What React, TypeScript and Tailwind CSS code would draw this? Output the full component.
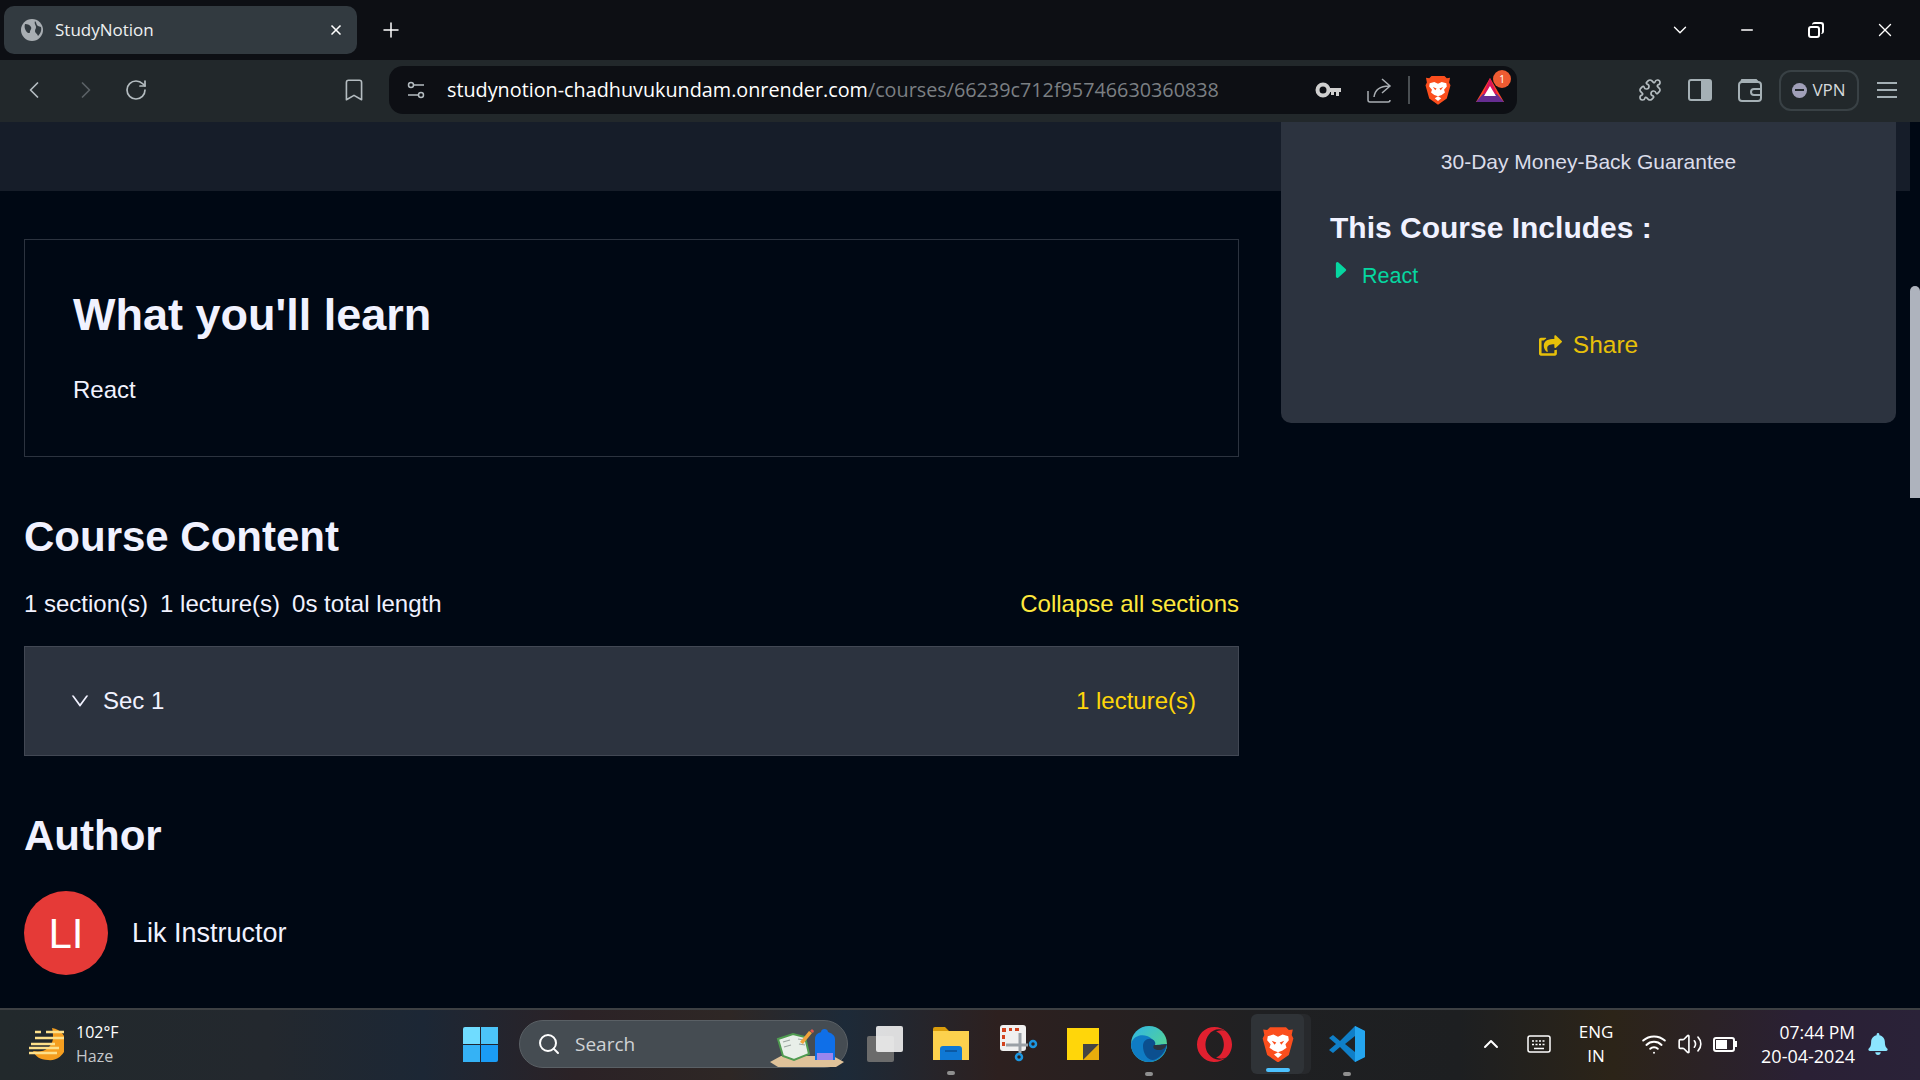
import { Puzzle, RotateCw, Search, ChevronLeft, ChevronRight, ChevronDown, ChevronUp, Plus, X, Minus, Wifi, Volume2, Bookmark } from "lucide-react";
import { FaShareSquare, FaBell } from "react-icons/fa";
import { BsFillCaretRightFill } from "react-icons/bs";
import { AiOutlineDown } from "react-icons/ai";
import { SiOpera } from "react-icons/si";

const BraveIcon = ({ size = 26 }: { size?: number }) => (
    <svg width={size} height={size * 1.14} viewBox="0 0 28 32">
        <path d="M7 1h14l2.500 2.500 3.500-.5-1 5 1.500 3-4 14.500L14 32l-9.500-6.500L.5 11 2 8 1 3l3.500.5z" fill="#fb4e1d" />
        <path d="M5 9l5-1.500 4 2 4-2L23 9l.5 3.500-3 3.500 1 3-3.500 2.500L14 23l-4-1.500L6.500 19l1-3-3-3.500z" fill="#fff" />
        <path d="M10.500 25l3.500-2 3.500 2L14 28z" fill="#fff" />
        <path d="M8.500 13l4 1.500-1.500 2zM19.500 13l-4 1.500 1.500 2z" fill="#fb4e1d" />
    </svg>
);

const BatIcon = () => (
    <svg width="28" height="26" viewBox="0 0 28 26">
        <path d="M14 1L0 25h28z" fill="#ff4724" />
        <path d="M14 1L7 17h14z" fill="#d9145b" />
        <path d="M0 25l7-8h14l7 8z" fill="#662d91" />
        <path d="M14 9l-6 10h12z" fill="#fff" />
    </svg>
);

const WeatherIcon = () => (
    <svg width="36" height="34" viewBox="0 0 36 34">
        <path d="M24 1a16 16 0 0 1-4 32C12 33 7 29 5 24c10 2 18-2 20-12 0-4 0-8-1-11z" fill="#f59e1f" />
        <path d="M3 17h24M1 21h30M1 26h28M7 5h6M18 5h18M7 11h30" stroke="#fde08a" strokeWidth="2.500" />
    </svg>
);

const WindowsLogo = () => (
    <div className="grid grid-cols-2 gap-[1px] w-[35px] h-[35px]">
        <div className="bg-[#6fdcff] rounded-tl-[2px]" />
        <div className="bg-[#4cc4f8]" />
        <div className="bg-[#35b2f5]" />
        <div className="bg-[#1a9cf5] rounded-br-[2px]" />
    </div>
);

const SearchArt = () => (
    <svg width="76" height="42" viewBox="0 0 76 42">
        <path d="M1 36l11-6h52l11 6-8 5H9z" fill="#dfc299" />
        <path d="M9 13l15-5 12 3 4 17-15 6-11-4z" fill="#e8efe9" stroke="#4f9b50" strokeWidth="2" />
        <path d="M14 16l7-2M15 21l7-2M29 13l6 1M30 18l6 1" stroke="#9aa5a0" strokeWidth="1.200" />
        <path d="M31 16l9-11 3 2-9 11z" fill="#f2a33a" />
        <path d="M41 5l2-2 2 2-1 2z" fill="#e2574c" />
        <path d="M46 34V13c0-5 4-6 6-7 0-4 7-4 7 0 3 1 7 3 7 7v21z" fill="#0f6fe8" />
        <path d="M48 27h16v7H48z" fill="#9a86ee" />
    </svg>
);

const TaskViewIcon = () => (
    <div className="relative w-[36px] h-[36px]">
        <div className="absolute left-0 bottom-0 w-[27px] h-[26px] rounded-[2px] bg-[#6b6b6b]" />
        <div className="absolute right-0 top-0 w-[27px] h-[26px] rounded-[2px] bg-[#f1f1f1] opacity-90" />
    </div>
);

const ExplorerIcon = () => (
    <svg width="36" height="34" viewBox="0 0 36 34">
        <path d="M0 2a2 2 0 0 1 2-2h10l4 4h-16z" fill="#d99c0b" />
        <path d="M0 4h36v29H0z" fill="#fcd14d" />
        <path d="M7 22a3 3 0 0 1 3-3h16a3 3 0 0 1 3 3v11H7z" fill="#0f78d4" />
        <path d="M12 24h12" stroke="#0a4f94" strokeWidth="1.500" />
    </svg>
);

const SnipIcon = () => (
    <svg width="38" height="38" viewBox="0 0 38 38">
        <rect x="0" y="0" width="26" height="26" rx="3" fill="#f0f0f0" />
        <path d="M2 3h4v4H2zM9 3h3v3H9zM15 3h4v3h-4zM2 10h3v4H2zM2 17h3v4H2z" fill="#d2421d" />
        <path d="M6 20h22M20 8v20" stroke="#9aa0a6" strokeWidth="3" />
        <circle cx="33" cy="19" r="3" fill="none" stroke="#1c96e0" strokeWidth="2.500" />
        <circle cx="19" cy="32" r="3" fill="none" stroke="#1c96e0" strokeWidth="2.500" />
    </svg>
);

const StickyIcon = () => (
    <svg width="32" height="32" viewBox="0 0 32 32">
        <path d="M0 0h32v16L16 32H0z" fill="#ffd60a" />
        <path d="M16 32V16h16z" fill="#444" />
        <path d="M16 32l16-16v16z" fill="#e8ad0c" />
    </svg>
);

const EdgeIcon = () => (
    <svg width="36" height="36" viewBox="0 0 36 36">
        <defs>
            <linearGradient id="edgeA" x1="0" y1="0" x2="1" y2="1">
                <stop offset="0" stopColor="#2fb5e8" />
                <stop offset="1" stopColor="#5fdc7c" />
            </linearGradient>
        </defs>
        <circle cx="18" cy="18" r="18" fill="url(#edgeA)" />
        <path d="M0 18C2 10 10 8 16 10c5 2 8 5 8 9H36c-1 10-9 17-18 17C8 36 0 28 0 18z" fill="#0f7cc4" />
        <path d="M12 20c0-5 4-8 8-7 4 1 5 4 4 6 4 0 6-1 12-1-2 9-8 15-14 16-6 0-10-7-10-14z" fill="#0b4f8f" />
        <path d="M23 19c-2 3 1 5 5 5s6-2 8-6c-4 1-8 1-13 1z" fill="#2c333f" />
    </svg>
);

const VsCodeIcon = () => (
    <svg width="36" height="36" viewBox="0 0 36 36">
        <path d="M26 0l10 5v26l-10 5L11 21l-7 6-4-3 7-6-7-6 4-3 7 6z" fill="#0f7fc8" />
        <path d="M26 0l10 5v26l-10 5z" fill="#24a5ef" />
        <path d="M26 10v16l-10-8z" fill="#202326" />
    </svg>
);

const Dot = ({ active }: { active?: boolean }) => (
    <div className={active ? "w-[24px] h-[4px] rounded-full bg-[#4cc2ff]" : "w-[8px] h-[4px] rounded-full bg-[#8f8f8f]"} />
);

export default function App() {
    return (
        <div className="w-[1920px] h-[1080px] flex flex-col overflow-hidden bg-[#000814] font-['Liberation_Sans',sans-serif]">
            {/* tab strip */}
            <div className="h-[60px] bg-[#0d0f14] flex items-center pl-[4px] text-white font-['Open_Sans',sans-serif]">
                <div className="w-[353px] h-[48px] rounded-[10px] bg-[#323a40] flex items-center pl-[17px] pr-[13px]">
                    <svg width="22" height="22" viewBox="0 0 22 22">
                        <circle cx="11" cy="11" r="11" fill="#a9aeb3" />
                        <path d="M4 5c3 0 5 1 6 3s-1 3-1 5-3 1-4-1-2-4-1-7zM14 2c2 2 1 4 3 5l3 1c1 4-1 7-3 9-1-3-3-3-3-5s1-2 1-4-2-3-1-6z" fill="#323a40" />
                    </svg>
                    <span className="ml-[12px] text-[17px] text-[#eef0f1]">StudyNotion</span>
                    <X className="ml-auto text-white" size={16} strokeWidth={2.500} />
                </div>
                <Plus className="ml-[22px]" size={24} strokeWidth={1.500} />
                <div className="ml-auto flex items-center">
                    <ChevronDown size={22} strokeWidth={1.500} className="w-[24px] mr-[46px]" />
                    <Minus size={18} strokeWidth={2} className="mr-[52px]" />
                    <div className="relative w-[16px] h-[16px] mr-[50px]">
                        <div className="absolute left-0 bottom-0 w-[12px] h-[12px] rounded-[3px] border-2 border-white" />
                        <div className="absolute right-0 top-0 w-[12px] h-[12px] rounded-[3px] border-t-2 border-r-2 border-white" />
                    </div>
                    <X size={22} strokeWidth={1.500} className="mr-[24px]" />
                </div>
            </div>

            {/* toolbar */}
            <div className="h-[62px] pb-[2px] bg-[#22282b] flex items-center font-['Open_Sans',sans-serif] text-[#b4bcc0]">
                <ChevronLeft className="ml-[20px]" size={28} strokeWidth={1.500} />
                <ChevronRight className="ml-[24px] text-[#5a6165]" size={28} strokeWidth={1.500} />
                <RotateCw className="ml-[24px]" size={24} strokeWidth={1.700} />
                <Bookmark className="ml-[193px]" size={26} strokeWidth={1.500} />
                <div className="ml-[22px] w-[1128px] h-[48px] rounded-[14px] bg-[#0d0f14] flex items-center">
                    <svg className="ml-[17px]" width="20" height="20" viewBox="0 0 20 20" fill="none" stroke="#b4bcc0" strokeWidth="1.500">
                        <circle cx="5" cy="5" r="2.500" />
                        <path d="M8 5h10M2 15h10" />
                        <circle cx="15" cy="15" r="2.500" />
                    </svg>
                    <span className="ml-[21px] text-[19.800px] text-white">studynotion-chadhuvukundam.onrender.com<span className="text-[#7b7f83]">/courses/66239c712f95746630360838</span></span>
                    <div className="ml-auto flex items-center">
                        <svg className="mr-[25px]" width="26" height="16" viewBox="0 0 26 16">
                            <circle cx="8" cy="8" r="5.500" fill="none" stroke="#cfcfcf" strokeWidth="4" />
                            <path d="M13 6h13v4h-2v4h-3v-4h-2v3h-3v-3h-3z" fill="#cfcfcf" />
                        </svg>
                        <svg className="mr-[16px]" width="26" height="26" viewBox="0 0 26 26" fill="none" stroke="#a9aeb3" strokeWidth="1.500">
                            <path d="M2 14v9a2 2 0 0 0 2 2h18a2 2 0 0 0 2-2M8 20c1-7 6-11 15-11M16 2l8 7-8 7" />
                        </svg>
                        <div className="w-[2px] h-[28px] bg-[#4a4f53] mr-[15px]" />
                        <div className="mr-[25px]"><BraveIcon /></div>
                        <div className="relative mr-[13px]">
                            <BatIcon />
                            <div className="absolute -top-[7px] -right-[7px] w-[18px] h-[18px] rounded-full bg-[#ee5b32] text-white text-[10px] flex items-center justify-center">1</div>
                        </div>
                    </div>
                </div>
                <Puzzle className="ml-[121px]" size={24} strokeWidth={1.700} />
                <div className="ml-[26px] w-[24px] h-[22px] rounded-[3px] border-2 border-[#a5b0b5] flex justify-end">
                    <div className="w-[9px] h-full bg-[#a5b0b5]" />
                </div>
                <svg className="ml-[26px]" width="24" height="24" viewBox="0 0 24 24" fill="none" stroke="#a5b0b5" strokeWidth="2">
                    <rect x="1" y="4" width="22" height="19" rx="3" />
                    <path d="M3 4l1-2h14l2 2M23 11h-7a2 2 0 0 0 0 6h7" />
                </svg>
                <div className="ml-[17px] w-[80px] h-[41px] rounded-[12px] border-2 border-[#394145] flex items-center justify-center gap-[5px] text-[#d5d9db] text-[17px]">
                    <div className="w-[15px] h-[15px] rounded-full bg-[#a09fb8] flex items-center justify-center">
                        <div className="w-[9px] h-[2px] bg-[#22282b]" />
                    </div>
                    VPN
                </div>
                <div className="ml-[18px] w-[20px] flex flex-col gap-[5px]">
                    <div className="h-[2px] bg-[#a5b0b5]" />
                    <div className="h-[2px] bg-[#a5b0b5]" />
                    <div className="h-[2px] bg-[#a5b0b5]" />
                </div>
            </div>

            {/* page */}
            <div className="flex-1 flex overflow-hidden">
                <div className="relative flex-1">
                    <div className="h-[69px] bg-[#161d29]" />

                    <div className="ml-[24px] w-[1215px] mt-[48px]">
                        <div className="h-[218px] border border-[#2c333f] pl-[48px] pt-[51px]">
                            <h2 className="text-[45px] leading-[48px] font-bold text-[#f1f2ff]">What you'll learn</h2>
                            <p className="mt-[36px] text-[24px] leading-[30px] text-[#f1f2ff]">React</p>
                        </div>

                        <h2 className="mt-[57px] text-[42px] leading-[46px] font-bold text-[#f1f2ff]">Course Content</h2>
                        <div className="mt-[29px] flex justify-between items-center text-[24px] leading-[30px] text-[#f1f2ff]">
                            <div className="flex gap-[12px]">
                                <span>1 section(s)</span>
                                <span>1 lecture(s)</span>
                                <span>0s total length</span>
                            </div>
                            <span className="text-[#ffe83d]">Collapse all sections</span>
                        </div>

                        <div className="mt-[27px] h-[110px] bg-[#2c333f] border border-[#424854] flex items-center pl-[44px] pr-[42px] text-[24px] text-[#f1f2ff]">
                            <AiOutlineDown size={22} />
                            <span className="ml-[12px]">Sec 1</span>
                            <span className="ml-auto text-[#ffd60a]">1 lecture(s)</span>
                        </div>

                        <h2 className="mt-[57px] text-[42px] leading-[46px] font-bold text-[#f1f2ff]">Author</h2>
                        <div className="mt-[32px] flex items-center">
                            <div className="w-[84px] h-[84px] rounded-full bg-[#e53a37] text-white text-[42px] flex items-center justify-center">LI</div>
                            <span className="ml-[24px] text-[27px] text-[#f1f2ff]">Lik Instructor</span>
                        </div>
                    </div>

                    {/* sticky buy card */}
                    <div className="absolute top-0 left-[1281px] w-[615px] h-[301px] bg-[#2c333f] rounded-b-[10px] flex flex-col">
                        <p className="mt-[26px] text-center text-[21px] leading-[28px] text-[#dbddea]">30-Day Money-Back Guarantee</p>
                        <h3 className="mt-[32px] ml-[49px] text-[30px] leading-[40px] font-bold text-[#f1f2ff]">This Course Includes :</h3>
                        <div className="mt-[14px] ml-[49px] flex text-[21.500px] leading-[28px] text-[#06d6a0]">
                            <BsFillCaretRightFill size={22} className="mt-[-3px] -ml-[1px]" />
                            <span className="ml-[11px]">React</span>
                        </div>
                        <div className="mt-[39px] flex items-center justify-center gap-[11px] text-[24.500px] leading-[32px] text-[#e7c009]">
                            <FaShareSquare size={23} />
                            Share
                        </div>
                    </div>
                </div>

                {/* scrollbar */}
                <div className="w-[10px] pt-[164px] bg-[#000814]">
                    <div className="h-[212px] rounded-t-full bg-[#aeb3bd]" />
                </div>
            </div>

            {/* taskbar */}
            <div className="h-[72px] pb-[2px] border-t-2 border-[#3d4043] flex items-center font-['Open_Sans',sans-serif] text-white bg-[linear-gradient(90deg,#22292c_0%,#23282e_14%,#1c2735_22%,#2b2226_30%,#2e2725_38%,#1d2a38_44%,#2d201f_52%,#1f2022_66%,#1d1f21_76%,#2c2418_84%,#2a2035_94%,#2a2238_100%)]">
                <div className="w-[463px] flex items-center pl-[28px]">
                    <WeatherIcon />
                    <div className="ml-[12px] flex flex-col text-[16px] leading-[24px]">
                        <span>102°F</span>
                        <span className="text-[#c4c7ca]">Haze</span>
                    </div>
                </div>
                <WindowsLogo />
                <div className="relative ml-[21px] w-[329px] h-[48px] rounded-full bg-[#454c52] border border-[#5a6065] flex items-center pl-[17px] text-[#d0d3d5]">
                    <Search size={24} strokeWidth={2} className="text-white" />
                    <span className="ml-[14px] text-[19px]">Search</span>
                    <div className="absolute right-[2px] -bottom-[1px]"><SearchArt /></div>
                </div>
                <div className="ml-[19px]"><TaskViewIcon /></div>
                <div className="ml-[30px] flex flex-col items-center relative">
                    <ExplorerIcon />
                    <div className="absolute -bottom-[14px]"><Dot /></div>
                </div>
                <div className="ml-[31px]"><SnipIcon /></div>
                <div className="ml-[29px]"><StickyIcon /></div>
                <div className="ml-[32px] flex flex-col items-center relative">
                    <EdgeIcon />
                    <div className="absolute -bottom-[14px]"><Dot /></div>
                </div>
                <SiOpera size={35} className="ml-[30px] text-[#e0202f]" />
                <div className="relative ml-[19px] w-[53px] h-[60px] rounded-[6px] bg-[#2f3337] flex items-center justify-center shadow-[7px_0_0_#27292c]">
                    <BraveIcon size={32} />
                    <div className="absolute bottom-[2px]"><Dot active /></div>
                </div>
                <div className="ml-[25px] flex flex-col items-center relative">
                    <VsCodeIcon />
                    <div className="absolute -bottom-[14px]"><Dot /></div>
                </div>

                <div className="ml-auto flex items-center">
                    <ChevronUp size={24} strokeWidth={2} />
                    <svg className="ml-[24px]" width="24" height="18" viewBox="0 0 24 18" fill="none" stroke="#fff" strokeWidth="1.500">
                        <rect x="1" y="1" width="22" height="16" rx="2" />
                        <path d="M5 6h14M5 9.500h14" strokeDasharray="2 1.500" />
                        <path d="M7 13.500h10" />
                    </svg>
                    <div className="ml-[23px] w-[44px] flex flex-col items-center text-[17px] leading-[24px]">
                        <span>ENG</span>
                        <span>IN</span>
                    </div>
                    <Wifi size={26} strokeWidth={1.800} className="ml-[23px]" />
                    <Volume2 size={26} strokeWidth={1.500} className="ml-[10px]" />
                    <div className="ml-[10px] w-[22px] h-[15px] rounded-[3px] border-2 border-white p-[1px]">
                        <div className="w-[11px] h-full bg-white" />
                    </div>
                    <div className="w-[2px] h-[6px] bg-white" />
                    <div className="ml-[18px] w-[100px] flex flex-col items-end leading-[24px]">
                        <span className="text-[17.500px]">07:44 PM</span>
                        <span className="text-[18px]">20-04-2024</span>
                    </div>
                    <FaBell size={22} className="ml-[12px] mr-[31px] text-[#8ce6ff]" />
                </div>
            </div>
        </div>
    );
}
